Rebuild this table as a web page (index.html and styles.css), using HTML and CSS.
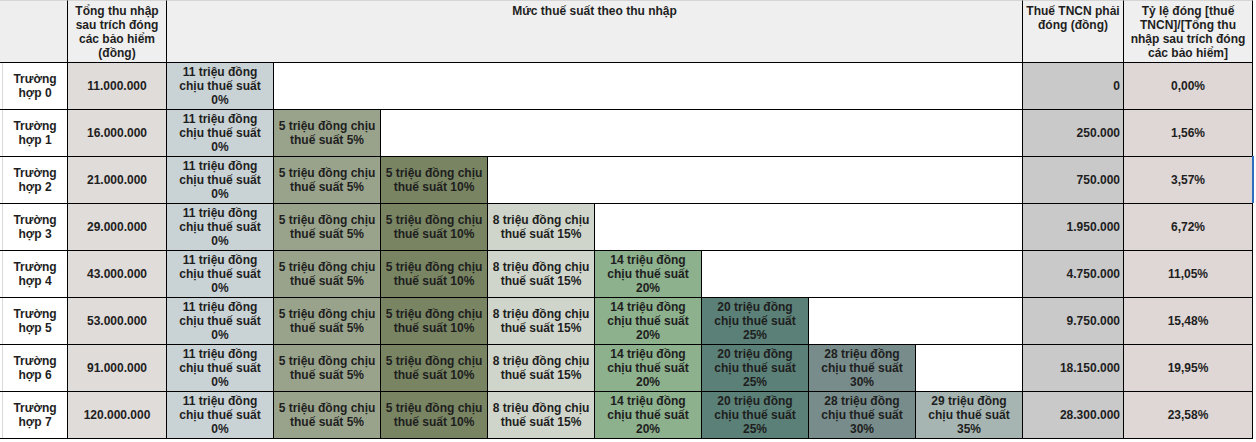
FILE: index.html
```html
<!DOCTYPE html>
<html lang="vi">
<head>
<meta charset="utf-8">
<title>Thuế TNCN</title>
<link rel="stylesheet" href="styles.css">
</head>
<body>
<div class="sheet">
  <div class="grid">
    <div class="c hd hd-a"></div>
    <div class="c hd top">Tổng thu nhập<br>sau trích đóng<br>các bảo hiểm<br>(đồng)</div>
    <div class="c hd top span8">Mức thuế suất theo thu nhập</div>
    <div class="c hd top">Thuế TNCN phải<br>đóng (đồng)</div>
    <div class="c hd top">Tỷ lệ đóng [thuế<br>TNCN]/[Tổng thu<br>nhập sau trích đóng<br>các bảo hiểm]</div>

    <div class="c lbl">Trường<br>hợp 0</div>
    <div class="c inc">11.000.000</div>
    <div class="c t1">11 triệu đồng<br>chịu thuế suất<br>0%</div>
    <div class="c blank s7"></div>
    <div class="c tax">0</div>
    <div class="c pct">0,00%</div>

    <div class="c lbl">Trường<br>hợp 1</div>
    <div class="c inc">16.000.000</div>
    <div class="c t1">11 triệu đồng<br>chịu thuế suất<br>0%</div>
    <div class="c t2">5 triệu đồng chịu<br>thuế suất 5%</div>
    <div class="c blank s6"></div>
    <div class="c tax">250.000</div>
    <div class="c pct">1,56%</div>

    <div class="c lbl">Trường<br>hợp 2</div>
    <div class="c inc">21.000.000</div>
    <div class="c t1">11 triệu đồng<br>chịu thuế suất<br>0%</div>
    <div class="c t2">5 triệu đồng chịu<br>thuế suất 5%</div>
    <div class="c t3">5 triệu đồng chịu<br>thuế suất 10%</div>
    <div class="c blank s5"></div>
    <div class="c tax">750.000</div>
    <div class="c pct">3,57%</div>

    <div class="c lbl">Trường<br>hợp 3</div>
    <div class="c inc">29.000.000</div>
    <div class="c t1">11 triệu đồng<br>chịu thuế suất<br>0%</div>
    <div class="c t2">5 triệu đồng chịu<br>thuế suất 5%</div>
    <div class="c t3">5 triệu đồng chịu<br>thuế suất 10%</div>
    <div class="c t4">8 triệu đồng chịu<br>thuế suất 15%</div>
    <div class="c blank s4"></div>
    <div class="c tax">1.950.000</div>
    <div class="c pct">6,72%</div>

    <div class="c lbl">Trường<br>hợp 4</div>
    <div class="c inc">43.000.000</div>
    <div class="c t1">11 triệu đồng<br>chịu thuế suất<br>0%</div>
    <div class="c t2">5 triệu đồng chịu<br>thuế suất 5%</div>
    <div class="c t3">5 triệu đồng chịu<br>thuế suất 10%</div>
    <div class="c t4">8 triệu đồng chịu<br>thuế suất 15%</div>
    <div class="c t5">14 triệu đồng<br>chịu thuế suất<br>20%</div>
    <div class="c blank s3"></div>
    <div class="c tax">4.750.000</div>
    <div class="c pct">11,05%</div>

    <div class="c lbl">Trường<br>hợp 5</div>
    <div class="c inc">53.000.000</div>
    <div class="c t1">11 triệu đồng<br>chịu thuế suất<br>0%</div>
    <div class="c t2">5 triệu đồng chịu<br>thuế suất 5%</div>
    <div class="c t3">5 triệu đồng chịu<br>thuế suất 10%</div>
    <div class="c t4">8 triệu đồng chịu<br>thuế suất 15%</div>
    <div class="c t5">14 triệu đồng<br>chịu thuế suất<br>20%</div>
    <div class="c t6">20 triệu đồng<br>chịu thuế suất<br>25%</div>
    <div class="c blank s2"></div>
    <div class="c tax">9.750.000</div>
    <div class="c pct">15,48%</div>

    <div class="c lbl">Trường<br>hợp 6</div>
    <div class="c inc">91.000.000</div>
    <div class="c t1">11 triệu đồng<br>chịu thuế suất<br>0%</div>
    <div class="c t2">5 triệu đồng chịu<br>thuế suất 5%</div>
    <div class="c t3">5 triệu đồng chịu<br>thuế suất 10%</div>
    <div class="c t4">8 triệu đồng chịu<br>thuế suất 15%</div>
    <div class="c t5">14 triệu đồng<br>chịu thuế suất<br>20%</div>
    <div class="c t6">20 triệu đồng<br>chịu thuế suất<br>25%</div>
    <div class="c t7">28 triệu đồng<br>chịu thuế suất<br>30%</div>
    <div class="c blank s1"></div>
    <div class="c tax">18.150.000</div>
    <div class="c pct">19,95%</div>

    <div class="c lbl">Trường<br>hợp 7</div>
    <div class="c inc">120.000.000</div>
    <div class="c t1">11 triệu đồng<br>chịu thuế suất<br>0%</div>
    <div class="c t2">5 triệu đồng chịu<br>thuế suất 5%</div>
    <div class="c t3">5 triệu đồng chịu<br>thuế suất 10%</div>
    <div class="c t4">8 triệu đồng chịu<br>thuế suất 15%</div>
    <div class="c t5">14 triệu đồng<br>chịu thuế suất<br>20%</div>
    <div class="c t6">20 triệu đồng<br>chịu thuế suất<br>25%</div>
    <div class="c t7">28 triệu đồng<br>chịu thuế suất<br>30%</div>
    <div class="c t8">29 triệu đồng<br>chịu thuế suất<br>35%</div>
    <div class="c tax">28.300.000</div>
    <div class="c pct">23,58%</div>
  </div>
  <div class="selection"></div>
</div>
</body>
</html>
```

FILE: styles.css
```css
html, body {
  margin: 0;
  padding: 0;
  background: #ffffff;
  overflow: hidden;
}

.sheet {
  position: relative;
  width: 1256px;
  height: 442px;
  background: #ffffff;
}

.grid {
  display: grid;
  grid-template-columns: 68px 99px repeat(8, 107px) 101px 129px;
  grid-template-rows: 63px repeat(8, 47px);
  font-family: "Liberation Sans", Arial, sans-serif;
  font-size: 12px;
  font-weight: bold;
  line-height: 14px;
  color: #1e1e1e;
}

.c {
  box-sizing: border-box;
  border-right: 1px solid #000;
  border-bottom: 1px solid #000;
  display: flex;
  align-items: center;
  justify-content: center;
  text-align: center;
  padding: 0 2px;
  white-space: nowrap;
}

.hd {
  background: #efefef;
  border-top: 1px solid #d6d6d6;
}

.hd.top {
  align-items: flex-start;
  padding-top: 3px;
}

.hd-a {
  background: #eeeeee;
}

.span8 {
  grid-column: span 8;
}

.lbl {
  padding-left: 5px;
  background: linear-gradient(to right, #ffffff 2px, #d9d9d9 2px, #d9d9d9 3px, #ffffff 3px);
}

.inc { background: #e0dcd9; }

.t1 { background: #c9d2d5; }
.t2 { background: #99a38c; }
.t3 { background: #788462; }
.t4 { background: #cfd5cb; }
.t5 { background: #8db08d; }
.t6 { background: #5b8077; }
.t7 { background: #788c8b; }
.t8 { background: #a6b5b2; }

.blank { background: #ffffff; }
.s1 { grid-column: span 1; }
.s2 { grid-column: span 2; }
.s3 { grid-column: span 3; }
.s4 { grid-column: span 4; }
.s5 { grid-column: span 5; }
.s6 { grid-column: span 6; }
.s7 { grid-column: span 7; }

.tax {
  background: #c9c9c9;
  justify-content: flex-end;
  padding-right: 3px;
}

.pct { background: #dfd7d6; }

.selection {
  position: absolute;
  left: 1252px;
  top: 156px;
  width: 2px;
  height: 47px;
  background: #2f6fc0;
}
```
